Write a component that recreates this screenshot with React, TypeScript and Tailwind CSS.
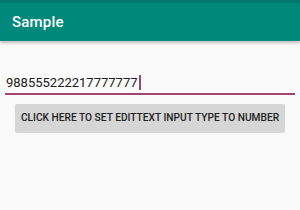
export default function App() {
  return (
    <div className="w-[300px] h-[210px] bg-[#fafafa] overflow-hidden" style={{ fontFamily: "Roboto, 'Liberation Sans', sans-serif" }}>
      <div className="h-[3px] bg-[#00796b]" />
      <div className="h-[38px] bg-[#00897b] flex items-center pl-[12px] shadow-[0_2px_3px_rgba(0,0,0,0.25)] relative">
        <span className="text-white text-[15px] font-medium tracking-[0.2px]">Sample</span>
      </div>
      <div className="px-[5px] pt-[34px]">
        <div className="border-b-2 border-[#a3436f] pb-[3px] flex items-center pl-[1px]">
          <span className="text-[13px] text-[#202020] leading-[15px]">988555222217777777</span>
          <span className="w-[2px] h-[15px] bg-[#a3436f] ml-[1px]" />
        </div>
        <div className="px-[10px] pt-[9px]">
          <button className="w-full h-[28px] bg-[#d6d6d6] rounded-[2px] shadow-[0_1px_1px_rgba(0,0,0,0.15)] text-[10.2px] font-medium text-[#222] uppercase">
            Click here to set EditText input type to number
          </button>
        </div>
      </div>
    </div>
  );
}
